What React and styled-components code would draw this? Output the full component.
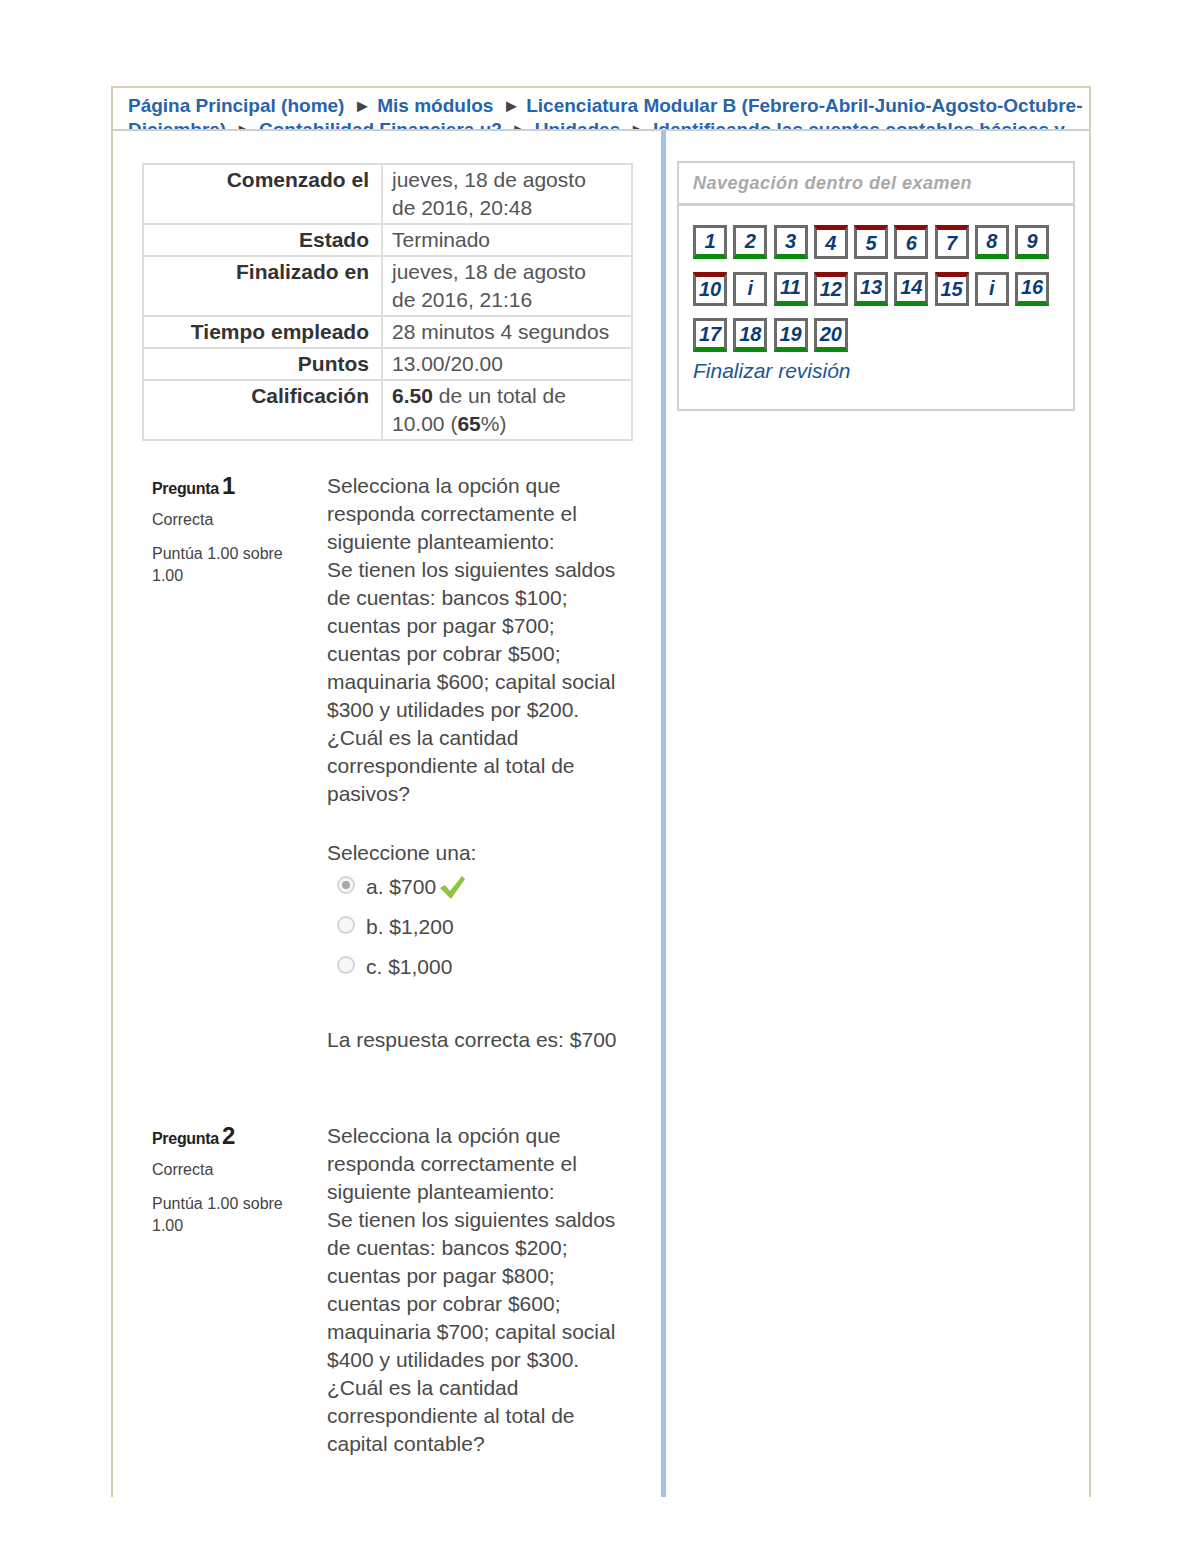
import React from 'react';
import styled, { createGlobalStyle } from 'styled-components';

const GlobalStyle = createGlobalStyle`
  body {
    margin: 0;
    background: #fff;
    font-family: "Liberation Sans", Arial, sans-serif;
  }
`;

const Page = styled.div`
  padding-top: 86px;
  height: 1553px;
  box-sizing: border-box;
`;

const Frame = styled.div`
  margin-left: 111px;
  width: 980px;
  height: 1411px;
  box-sizing: border-box;
  border: 2px solid #d6cfb2;
  border-bottom: none;
  overflow: hidden;
  display: flex;
  flex-direction: column;
`;

const Breadcrumb = styled.div`
  height: 43px;
  flex-shrink: 0;
  box-sizing: border-box;
  overflow: hidden;
  padding: 6px 0 0 15px;
  border-bottom: 2px solid #cfcfcf;
  font-size: 19px;
  font-weight: bold;
  line-height: 24px;
  color: #2764ad;
  white-space: nowrap;
`;

const Arrow = styled.span`
  color: #444;
  font-size: 18px;
  margin: 0 6px 0 9px;
`;

const Body = styled.div`
  flex: 1;
  display: flex;
  min-height: 0;
`;

const LeftCol = styled.div`
  width: 548px;
  flex-shrink: 0;
  box-sizing: border-box;
  padding: 32px 0 0 29px;
`;

const RightCol = styled.div`
  flex: 1;
  border-left: 5px solid #9fc4e6;
  padding: 30px 0 0 11px;
`;

const Summary = styled.table`
  width: 491px;
  border-collapse: collapse;
  font-size: 21px;
  line-height: 28px;
`;

const Label = styled.th`
  width: 225px;
  border: 2px solid #dedede;
  padding: 1px 12px 1px 0;
  text-align: right;
  vertical-align: top;
  color: #333;
  font-weight: bold;
  white-space: nowrap;
`;

const Value = styled.td`
  border: 2px solid #dedede;
  padding: 1px 0 1px 9px;
  vertical-align: top;
  color: #555;
  b { color: #333; }
`;

const Question = styled.div`
  display: flex;
  padding-left: 10px;
  margin-top: ${p => p.$gap}px;
`;

const Meta = styled.div`
  width: 175px;
  flex-shrink: 0;
  color: #444;
  font-size: 16px;
`;

const QTitle = styled.div`
  line-height: 28px;
  font-weight: bold;
  color: #222;
  font-size: 16px;
  letter-spacing: -0.3px;
  span {
    font-size: 24px;
    margin-left: 3px;
    letter-spacing: 0;
  }
`;

const MetaLine = styled.div`
  line-height: 22px;
  margin-top: ${p => p.$mt}px;
`;

const Content = styled.div`
  width: 300px;
  color: #4a4a4a;
  font-size: 21px;
  line-height: 28px;
  white-space: nowrap;
`;

const Prompt = styled.div`
  margin-top: 31px;
`;

const Options = styled.div`
  padding-left: 10px;
`;

const Option = styled.label`
  display: flex;
  align-items: center;
  height: 40px;
  gap: 11px;
`;

const Radio = styled.span`
  width: 14px;
  height: 14px;
  border-radius: 50%;
  border: 2px solid #d4d4d4;
  background: #f7f7f7;
  display: flex;
  align-items: center;
  justify-content: center;
  margin-top: -4px;
  &::after {
    content: '';
    width: 8px;
    height: 8px;
    border-radius: 50%;
    background: ${p => (p.$checked ? '#a8a8a8' : 'transparent')};
  }
`;

const OptionText = styled.span`
  display: flex;
  align-items: center;
  gap: 3px;
`;

const Answer = styled.div`
  margin-top: 39px;
`;

const NavBox = styled.div`
  width: 398px;
  height: 250px;
  box-sizing: border-box;
  border: 2px solid #d0d0d0;
`;

const NavHeader = styled.div`
  height: 40px;
  line-height: 40px;
  border-bottom: 3px solid #d0d0d0;
  padding-left: 14px;
  font-size: 18px;
  font-weight: bold;
  font-style: italic;
  letter-spacing: 0.5px;
  color: #a9a9a9;
`;

const NavContent = styled.div`
  padding: 19px 0 0 14px;
`;

const ButtonGrid = styled.div`
  display: grid;
  grid-template-columns: repeat(9, 34px);
  column-gap: 6.25px;
  row-gap: 12.5px;
`;

const QButton = styled.div`
  width: 34px;
  height: 34px;
  box-sizing: border-box;
  border: 3px solid #6b6b6b;
  border-top: ${p => (p.$state === 'wrong' ? '5px solid #8b0a0a' : '3px solid #6b6b6b')};
  border-bottom: ${p => (p.$state === 'right' ? '5px solid #0a8a0a' : '3px solid #6b6b6b')};
  background: #fff;
  display: flex;
  align-items: center;
  justify-content: center;
  font-size: 20px;
  font-weight: bold;
  font-style: italic;
  color: #0c3c78;
`;

const FinishLink = styled.a`
  display: block;
  margin-top: 7px;
  font-size: 21px;
  line-height: 24px;
  font-style: italic;
  color: #245593;
  text-decoration: none;
`;

const summaryRows = [
  ['Comenzado el', <>jueves, 18 de agosto<br />de 2016, 20:48</>],
  ['Estado', 'Terminado'],
  ['Finalizado en', <>jueves, 18 de agosto<br />de 2016, 21:16</>],
  ['Tiempo empleado', '28 minutos 4 segundos'],
  ['Puntos', '13.00/20.00'],
  ['Calificación', <><b>6.50</b> de un total de<br />10.00 (<b>65</b>%)</>],
];

const navButtons = [
  ['1', 'right'], ['2', 'right'], ['3', 'right'], ['4', 'wrong'], ['5', 'wrong'],
  ['6', 'wrong'], ['7', 'wrong'], ['8', 'right'], ['9', 'right'],
  ['10', 'wrong'], ['i', 'info'], ['11', 'right'], ['12', 'wrong'], ['13', 'right'],
  ['14', 'right'], ['15', 'wrong'], ['i', 'info'], ['16', 'right'],
  ['17', 'right'], ['18', 'right'], ['19', 'right'], ['20', 'right'],
];

const questions = [
  {
    num: 1,
    gap: 31,
    lines: [
      'Selecciona la opción que',
      'responda correctamente el',
      'siguiente planteamiento:',
      'Se tienen los siguientes saldos',
      'de cuentas: bancos $100;',
      'cuentas por pagar $700;',
      'cuentas por cobrar $500;',
      'maquinaria $600; capital social',
      '$300 y utilidades por $200.',
      '¿Cuál es la cantidad',
      'correspondiente al total de',
      'pasivos?',
    ],
    options: ['a. $700', 'b. $1,200', 'c. $1,000'],
    answer: 'La respuesta correcta es: $700',
  },
  {
    num: 2,
    gap: 68,
    lines: [
      'Selecciona la opción que',
      'responda correctamente el',
      'siguiente planteamiento:',
      'Se tienen los siguientes saldos',
      'de cuentas: bancos $200;',
      'cuentas por pagar $800;',
      'cuentas por cobrar $600;',
      'maquinaria $700; capital social',
      '$400 y utilidades por $300.',
      '¿Cuál es la cantidad',
      'correspondiente al total de',
      'capital contable?',
    ],
  },
];

const CheckMark = () => (
  <svg width="27" height="25" viewBox="0 0 27 25">
    <polygon points="1,13 6,10 11,16 23,1 26,4 12,24" fill="#8cc63f" />
  </svg>
);

const QuestionBlock = ({ q }) => (
  <Question $gap={q.gap}>
    <Meta>
      <QTitle>Pregunta<span>{q.num}</span></QTitle>
      <MetaLine $mt={6}>Correcta</MetaLine>
      <MetaLine $mt={12}>Puntúa 1.00 sobre<br />1.00</MetaLine>
    </Meta>
    <Content>
      {q.lines.map((l, i) => <div key={i}>{l}</div>)}
      {q.options && (
        <>
          <Prompt>Seleccione una:</Prompt>
          <Options>
            {q.options.map((o, i) => (
              <Option key={o}>
                <Radio $checked={i === 0} />
                <OptionText>{o}{i === 0 && <CheckMark />}</OptionText>
              </Option>
            ))}
          </Options>
          <Answer>{q.answer}</Answer>
        </>
      )}
    </Content>
  </Question>
);

export default function App() {
  return (
    <Page>
      <GlobalStyle />
      <Frame>
        <Breadcrumb>
          Página Principal (home)<Arrow>►</Arrow>Mis módulos<Arrow>►</Arrow>Licenciatura Modular B (Febrero-Abril-Junio-Agosto-Octubre-
          <br />
          Diciembre)<Arrow>►</Arrow>Contabilidad Financiera u2<Arrow>►</Arrow>Unidades<Arrow>►</Arrow>Identificando las cuentas contables básicas y
        </Breadcrumb>
        <Body>
          <LeftCol>
            <Summary>
              <tbody>
                {summaryRows.map(([k, v]) => (
                  <tr key={k}>
                    <Label>{k}</Label>
                    <Value>{v}</Value>
                  </tr>
                ))}
              </tbody>
            </Summary>
            {questions.map(q => <QuestionBlock key={q.num} q={q} />)}
          </LeftCol>
          <RightCol>
            <NavBox>
              <NavHeader>Navegación dentro del examen</NavHeader>
              <NavContent>
                <ButtonGrid>
                  {navButtons.map(([n, s], i) => (
                    <QButton key={i} $state={s}>{n}</QButton>
                  ))}
                </ButtonGrid>
                <FinishLink href="#">Finalizar revisión</FinishLink>
              </NavContent>
            </NavBox>
          </RightCol>
        </Body>
      </Frame>
    </Page>
  );
}
